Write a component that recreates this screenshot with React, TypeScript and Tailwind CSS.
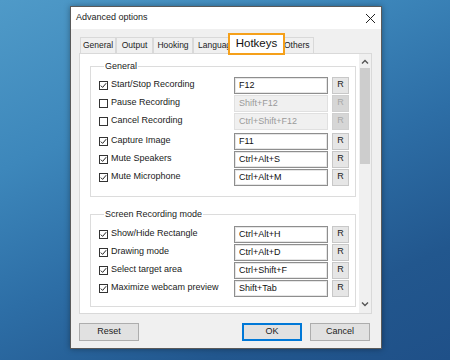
import React from 'react';

type Hotkey = {
  label: string;
  keys: string;
  checked: boolean;
  extra?: string;
};

const general: Hotkey[] = [
  { label: 'Start/Stop Recording', keys: 'F12', checked: true },
  { label: 'Pause Recording', keys: 'Shift+F12', checked: false },
  { label: 'Cancel Recording', keys: 'Ctrl+Shift+F12', checked: false },
  { label: 'Capture Image', keys: 'F11', checked: true, extra: 'mt-[2px]' },
  { label: 'Mute Speakers', keys: 'Ctrl+Alt+S', checked: true },
  { label: 'Mute Microphone', keys: 'Ctrl+Alt+M', checked: true },
];

const screen: Hotkey[] = [
  { label: 'Show/Hide Rectangle', keys: 'Ctrl+Alt+H', checked: true },
  { label: 'Drawing mode', keys: 'Ctrl+Alt+D', checked: true },
  { label: 'Select target area', keys: 'Ctrl+Shift+F', checked: true },
  { label: 'Maximize webcam preview', keys: 'Shift+Tab', checked: true },
];

function Checkbox({ checked }: { checked: boolean }) {
  return (
    <div className="flex h-[9px] w-[9px] shrink-0 items-center justify-center border border-[#333] bg-white">
      {checked && (
        <svg width="7" height="7" viewBox="0 0 7 7">
          <path d="M0.8 3.6 L2.6 5.4 L6.2 1.2" fill="none" stroke="#222" strokeWidth="1" />
        </svg>
      )}
    </div>
  );
}

function HotkeyRow({ item }: { item: Hotkey }) {
  const on = item.checked;
  return (
    <div className={`flex h-[18px] items-center ${item.extra ?? ''}`}>
      <div className="flex flex-1 items-center gap-[3px]">
        <Checkbox checked={on} />
        <span className="text-[#1a1a1a]">{item.label}</span>
      </div>
      <div
        className={
          on
            ? 'flex h-[17px] w-[94px] items-start border border-[#8e8e8e] bg-white px-[4px] pt-[1px] text-[#111] shadow-[inset_0_0_0_1px_#e6e6e6]'
            : 'flex h-[17px] w-[94px] items-start border border-[#e0e0e0] bg-[#f0f0f0] px-[4px] pt-[1px] text-[#9a9a9a]'
        }
      >
        {item.keys}
      </div>
      <div
        className={
          on
            ? 'ml-[4px] flex h-[17px] w-[17px] items-center justify-center border border-[#c8c8c8] bg-[#e6e6e6] text-[#222]'
            : 'ml-[4px] flex h-[17px] w-[17px] items-center justify-center border border-[#d0d0d0] bg-[#d6d6d6] text-[#a8a8a8]'
        }
      >
        R
      </div>
    </div>
  );
}

function Group({
  title,
  items,
  className,
}: {
  title: string;
  items: Hotkey[];
  className: string;
}) {
  return (
    <fieldset className={`w-[266px] border border-[#dcdcdc] pl-[8px] pr-[6px] ${className}`}>
      <legend className="ml-[5px] px-[1px] leading-[12px] text-[#222]">{title}</legend>
      {items.map((it) => (
        <HotkeyRow key={it.label} item={it} />
      ))}
    </fieldset>
  );
}

const tabs = [
  { name: 'General', w: 'w-[36px]' },
  { name: 'Output', w: 'w-[37px]' },
  { name: 'Hooking', w: 'w-[40px]' },
];

export default function App() {
  return (
    <div
      className="h-[360px] w-[450px] overflow-hidden bg-[linear-gradient(155deg,#4f9ac8_0%,#3d87bb_30%,#2d6ea6_55%,#22578e_80%,#1f5088_100%)] pl-[70px] pt-[6px] text-[9px]"
      style={{ fontFamily: '"Liberation Sans", Arial, sans-serif' }}
    >
      <div className="flex h-[343px] w-[312px] flex-col border border-[#5a5a5a] bg-[#f0f0f0] shadow-[0_0_6px_rgba(0,0,0,0.35)]">
        {/* title bar */}
        <div className="flex h-[22px] shrink-0 items-center justify-between bg-white pl-[5px] pr-[4px]">
          <span className="text-[9px] text-[#222]">Advanced options</span>
          <svg width="11" height="11" viewBox="0 0 11 11" className="mr-[1px]">
            <path d="M1 1 L10 10 M10 1 L1 10" stroke="#222" strokeWidth="1" />
          </svg>
        </div>

        <div className="flex flex-1 flex-col px-[8px] pt-[4px]">
          {/* tabs */}
          <div className="flex h-[20px] items-end pl-[1px] text-[8.5px]">
            {tabs.map((t) => (
              <div
                key={t.name}
                className={`flex h-[16px] ${t.w} items-center justify-center border border-b-0 border-[#d9d9d9] bg-[#f0f0f0] text-[#222]`}
              >
                {t.name}
              </div>
            ))}
            <div className="flex h-[16px] w-[35px] items-center overflow-hidden whitespace-nowrap border border-b-0 border-r-0 border-[#d9d9d9] bg-[#f0f0f0] pl-[4px] text-[#222]">
              Language
            </div>
            <div className="relative z-10 -mb-[2px] flex h-[22px] w-[57px] items-center justify-center border-2 border-[#f5a01a] bg-white text-[11.5px] text-[#111]">
              Hotkeys
            </div>
            <div className="-ml-[5px] flex h-[16px] items-center border border-b-0 border-[#d9d9d9] bg-[#f0f0f0] pl-[3px] pr-[3px] text-[#222]">
              Others
            </div>
          </div>

          {/* panel */}
          <div className="flex h-[261px] w-[293px] border border-[#d9d9d9] bg-white">
            <div className="flex-1 overflow-hidden pl-[10px]">
              <Group title="General" items={general} className="mt-[6px] pb-[10px] pt-[4px]" />
              <Group title="Screen Recording mode" items={screen} className="mt-[11px] pb-[9px] pt-[5px]" />
            </div>
            <div className="flex w-[12px] flex-col items-center bg-[#f0f0f0]">
              <svg width="8" height="6" viewBox="0 0 8 6" className="mt-[5px]">
                <path d="M1 4.5 L4 1.5 L7 4.5" fill="none" stroke="#555" strokeWidth="1.4" />
              </svg>
              <div className="mt-[3px] h-[96px] w-[10px] bg-[#cdcdcd]" />
              <div className="flex-1" />
              <svg width="8" height="6" viewBox="0 0 8 6" className="mb-[6px]">
                <path d="M1 1.5 L4 4.5 L7 1.5" fill="none" stroke="#555" strokeWidth="1.4" />
              </svg>
            </div>
          </div>

          {/* buttons */}
          <div className="mt-[9px] flex items-center pr-[3px]">
            <div className="flex h-[18px] w-[60px] items-center justify-center border border-[#adadad] bg-[#e1e1e1] text-[#222]">
              Reset
            </div>
            <div className="flex-1" />
            <div className="flex h-[18px] w-[60px] items-center justify-center border-2 border-[#0078d7] bg-[#e1e1e1] text-[#222]">
              OK
            </div>
            <div className="ml-[8px] flex h-[18px] w-[60px] items-center justify-center border border-[#adadad] bg-[#e1e1e1] text-[#222]">
              Cancel
            </div>
          </div>
        </div>
      </div>
    </div>
  );
}
